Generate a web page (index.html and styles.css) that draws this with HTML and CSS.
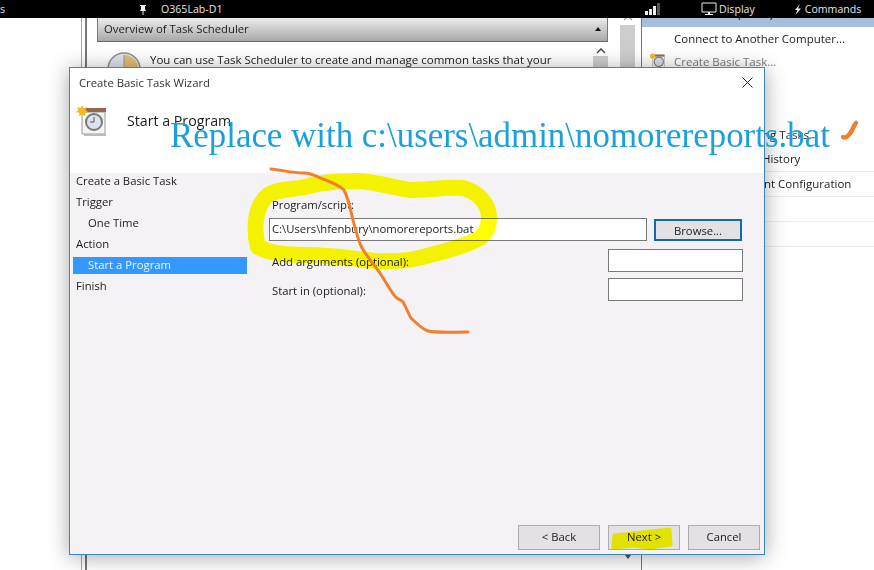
FILE: index.html
```html
<!DOCTYPE html>
<html lang="en">
<head>
    <meta charset="UTF-8">
    <title>Create Basic Task Wizard</title>
    <link rel="stylesheet" href="styles.css">
</head>
<body>
    <div class="page">
        <div class="topbar">
            <span class="cut-label">s</span>
            <svg class="pin" width="10" height="11" viewBox="0 0 10 11"><path d="M2 1h6v1H7v3l1 2H5.500v4h-1V7H2l1-2V2H2z" fill="#eee"/></svg>
            <span class="host">O365Lab-D1</span>
            <svg class="signal" width="17" height="14" viewBox="0 0 17 14"><path d="M0 9h3v4H0zM4 7h3v6H4zM8 4h3v9H8z" fill="#eee"/><path d="M12 1h3v12h-3z" fill="#555"/></svg>
            <svg class="screen" width="16" height="14" viewBox="0 0 16 14"><path d="M1 1h14v9H1z" fill="none" stroke="#eee"/><path d="M7 10h2v2H7zM4 12h8v1H4z" fill="#eee"/></svg>
            <span class="bar-label">Display</span>
            <svg class="bolt" width="8" height="11" viewBox="0 0 8 11"><path d="M6 0 1 6h2.500L1.500 11 7 4.500H4z" fill="#eee"/></svg>
            <span class="bar-label">Commands</span>
        </div>

        <div class="mmc">
            <div class="tree-blank"></div>
            <div class="splitter"></div>
            <div class="center">
                <div class="overview-head">
                    <span>Overview of Task Scheduler</span>
                    <span class="caret-up"></span>
                </div>
                <div class="overview-body">
                    <svg class="overview-clock" width="34" height="34" viewBox="0 0 34 34">
                        <circle cx="17" cy="17" r="16" fill="#dfe3ea" stroke="#8a8f98" stroke-width="1.500"/>
                        <path d="M17 3a14 14 0 0 1 0 28z" fill="#e2bd6e"/>
                        <path d="M17 3v14H6" fill="none" stroke="#8d95b5"/>
                    </svg>
                    <p class="overview-text">You can use Task Scheduler to create and manage common tasks that your</p>
                    <div class="inner-scroll">
                        <svg class="chevron" width="10" height="6" viewBox="0 0 10 6"><path d="M1 5l4-4 4 4" fill="none" stroke="#444" stroke-width="1.300"/></svg>
                        <div class="inner-thumb"></div>
                    </div>
                </div>
            </div>
            <div class="outer-scroll">
                <svg class="chevron chevron-cut" width="10" height="6" viewBox="0 0 10 6"><path d="M1 5l4-4 4 4" fill="none" stroke="#999" stroke-width="1.300"/></svg>
                <div class="outer-thumb"></div>
                <span class="caret-down"></span>
            </div>
            <div class="actions">
                <div class="actions-title"><span>Task Scheduler (Local)</span></div>
                <div class="action action-connect">Connect to Another Computer...</div>
                <div class="action action-off">
                    <svg class="action-icon" width="17" height="16" viewBox="0 0 31 31">
                        <path d="M6 4h23v25H6z" fill="#f7f5f0" stroke="#999"/>
                        <path d="M6 3h23v4H6z" fill="#94684e"/>
                        <circle cx="18" cy="17" r="9" fill="#d8dfe8" stroke="#777" stroke-width="2"/>
                        <circle cx="6" cy="6" r="5" fill="#f5b81f"/>
                    </svg>
                    Create Basic Task...
                </div>
                <div class="action action-gap">Import Task...</div>
                <div class="action action-tasks">Display All Running Tasks</div>
                <div class="action action-line">Enable All Tasks History</div>
                <div class="action action-line">AT Service Account Configuration</div>
                <div class="action action-line"></div>
                <div class="action action-line"></div>
            </div>
        </div>

        <div class="wizard">
            <div class="wizard-title">
                <span>Create Basic Task Wizard</span>
                <svg width="11" height="11" viewBox="0 0 11 11"><path d="M.5.500l10 10M10.500.500l-10 10" stroke="#222" fill="none"/></svg>
            </div>
            <div class="wizard-head">
                <svg class="wizard-icon" width="31" height="31" viewBox="0 0 31 31">
                    <path d="M6 7h23v22H6z" fill="#f7f5f0" stroke="#9a9a9a"/>
                    <path d="M8 29h22v2H8z" fill="#bbb"/>
                    <path d="M6 3h24v4H6z" fill="#94684e"/>
                    <circle cx="18" cy="17" r="8" fill="#dbe2ec" stroke="#75787d" stroke-width="2"/>
                    <path d="M18 12v5h-4" fill="none" stroke="#555"/>
                    <path d="M6 0l1.500 3L11 2 9.500 5 12 7l-3 1 .5 3L6 9.500 3 11l.5-3L0 7l2.500-2L1 2l3.500 1z" fill="#f5b81f"/>
                </svg>
                <h1 class="wizard-heading">Start a Program</h1>
            </div>
            <div class="wizard-body">
                <ul class="steps">
                    <li>Create a Basic Task</li>
                    <li>Trigger</li>
                    <li class="sub">One Time</li>
                    <li>Action</li>
                    <li class="sub current">Start a Program</li>
                    <li>Finish</li>
                </ul>
                <div class="form">
                    <label class="field-label">Program/script:</label>
                    <div class="form-row program-row">
                        <input class="box box-wide" value="C:\Users\hfenbury\nomorereports.bat">
                        <button class="btn btn-browse">Browse...</button>
                    </div>
                    <div class="form-row opt-row">
                        <label class="field-label">Add arguments (optional):</label>
                        <input class="box box-small">
                    </div>
                    <div class="form-row opt-row">
                        <label class="field-label">Start in (optional):</label>
                        <input class="box box-small">
                    </div>
                </div>
            </div>
            <div class="wizard-foot">
                <button class="btn btn-back">&lt; Back</button>
                <button class="btn btn-next">Next &gt;</button>
                <button class="btn btn-next">Cancel</button>
            </div>
        </div>

        <div class="callout">Replace with c:\users\admin\nomorereports.bat</div>

        <svg class="marker" width="874" height="570" viewBox="0 0 874 570">
            <path d="M258 247C253 228 255 206 268 195C280 188 292 190 305 187C320 182 340 181 358 181C376 182 392 187 410 190C425 190 445 187 463 188C479 192 488 204 489 216C489 226 487 232 480 238C470 244 450 250 430 255C415 260 395 262 375 261C350 258 330 255 305 255C288 255 270 254 258 247Z" fill="none" stroke="#ffff00" stroke-width="16" stroke-linejoin="round"/>
            <path d="M613 548L614 535 633 533 670 529 671 545 650 548 633 546Z" fill="#ffff00" stroke="#ffff00" stroke-width="3" stroke-linejoin="round"/>
        </svg>
        <svg class="pen" width="874" height="570" viewBox="0 0 874 570">
            <path d="M271 169C282 170 292 173 303 173C311 172 317 177 323 179C331 182 339 185 344 190C349 200 351 212 353 220C356 232 359 242 362 248C368 258 375 266 380 273C385 281 390 290 394 295C397 300 401 299 403 302C406 307 408 313 411 318C416 323 422 329 428 331C436 333 452 332 468 332" fill="none" stroke="#f0802f" stroke-width="3" stroke-linecap="round" stroke-linejoin="round"/>
            <path d="M843 137C846 139 849 135 851 132C853 129 854 125 856 123" fill="none" stroke="#f0802f" stroke-width="4.500" stroke-linecap="round" stroke-linejoin="round"/>
        </svg>
    </div>
</body>
</html>
```

FILE: styles.css
```css
body {
    margin: 0;
    background-color: #fff;
}
.page {
    position: relative;
    width: 874px;
    height: 570px;
    overflow: hidden;
    font-family: "Open Sans", "Noto Sans", sans-serif;
    font-size: 11.5px;
    color: #1c1c1c;
}

/* remote session bar */
.topbar {
    position: relative;
    z-index: 1;
    display: flex;
    align-items: center;
    height: 18px;
    background-color: #000;
    color: #e6e6e6;
    font-size: 10.6px;
}
.cut-label {
    width: 138px;
}
.pin {
    margin-right: 13px;
}
.host {
    width: 484px;
}
.signal {
    margin-right: 39px;
}
.screen {
    margin-right: 2px;
}
.bar-label {
    white-space: nowrap;
}
.bolt {
    margin-left: 39px;
    margin-right: 3px;
}

/* task scheduler behind the dialog */
.mmc {
    display: flex;
    height: 552px;
}
.tree-blank {
    width: 81px;
}
.splitter {
    width: 3px;
    border-left: 1px solid #a8a8a8;
    border-right: 2px solid #777;
}
.center {
    width: 511px;
    margin-left: 10px;
}
.overview-head {
    display: flex;
    justify-content: space-between;
    align-items: center;
    box-sizing: border-box;
    height: 24px;
    padding: 0 6px 2px 6px;
    background: linear-gradient(#ececec, #a8a8a8);
    border-left: 1px solid #777;
    border-right: 1px solid #777;
    border-bottom: 1px solid #666;
    font-size: 11.3px;
}
.caret-up {
    border: 3px solid transparent;
    border-top: 0;
    border-bottom: 4px solid #111;
}
.overview-body {
    display: flex;
    padding: 10px 0 0 10px;
}
.overview-clock {
    flex: none;
}
.overview-text {
    margin: -1px 0 0 9px;
    line-height: 18px;
    white-space: nowrap;
}
.inner-scroll {
    display: flex;
    flex-direction: column;
    align-items: center;
    gap: 2px;
    width: 15px;
    margin: -4px 0 0 auto;
}
.inner-thumb {
    width: 15px;
    height: 60px;
    background-color: #cdcdcd;
}
.outer-scroll {
    display: flex;
    flex-direction: column;
    align-items: center;
    box-sizing: border-box;
    width: 15px;
    margin-left: 12px;
    padding: 0 0 11px;
}
.chevron-cut {
    margin-top: -3px;
}
.outer-thumb {
    flex: 1;
    width: 15px;
    margin: 4px 0 2px;
    background: linear-gradient(#cdcdcd 46px, #f2f2f2 46px);
}
.caret-down {
    border: 3px solid transparent;
    border-bottom: 0;
    border-top: 4px solid #555;
}
.actions {
    flex: 1;
    margin-left: 6px;
    border-left: 1px solid #777;
}
.actions-title {
    display: flex;
    align-items: flex-end;
    box-sizing: border-box;
    height: 9px;
    overflow: hidden;
    padding: 0 0 6px 8px;
    background-color: #a7bfdc;
    line-height: 14px;
    font-size: 12px;
    white-space: nowrap;
}
.action {
    box-sizing: border-box;
    position: relative;
    height: 25px;
    padding-left: 32px;
    line-height: 24px;
    white-space: nowrap;
    border-bottom: 1px solid transparent;
}
.action-connect {
    height: 23px;
}
.action-off {
    height: 23px;
    color: #7b7b7b;
}
.action-icon {
    position: absolute;
    left: 7px;
    top: 3px;
}
.action-gap {
    height: 48px;
    visibility: hidden;
}
.action-tasks {
    height: 26px;
    line-height: 28px;
}
.action-line {
    border-bottom-color: #ececec;
}

/* wizard dialog */
.wizard {
    position: absolute;
    left: 69px;
    top: 67px;
    display: flex;
    flex-direction: column;
    box-sizing: border-box;
    width: 696px;
    height: 488px;
    background-color: #fff;
    border: 1px solid #3f86bd;
    box-shadow: 0 2px 20px rgba(0, 0, 0, 0.35);
    font-size: 11.3px;
}
.wizard-title {
    display: flex;
    justify-content: space-between;
    align-items: center;
    height: 30px;
    padding: 0 11px 2px 9px;
    box-sizing: border-box;
    color: #333;
}
.wizard-head {
    display: flex;
    height: 75px;
    box-sizing: border-box;
    padding: 7px 6px 0;
    gap: 20px;
}
.wizard-heading {
    margin: 0;
    font-size: 14.2px;
    font-weight: 400;
    line-height: 32px;
}
.wizard-body {
    flex: 1;
    display: flex;
    background-color: #f5f2f6;
}
.steps {
    width: 174px;
    margin: 0 0 0 3px;
    padding: 0;
    list-style: none;
}
.steps li {
    height: 17px;
    margin-bottom: 4px;
    padding-left: 3px;
    line-height: 15px;
}
.steps .sub {
    padding-left: 15px;
}
.steps .current {
    background-color: #3399ff;
    color: #f0f6ff;
}
.form {
    width: 474px;
    margin-left: 22px;
    padding-top: 21px;
}
.field-label {
    display: block;
    padding-left: 3px;
    line-height: 22px;
}
.form-row {
    display: flex;
    justify-content: space-between;
}
.program-row {
    margin: 2px 0 8px;
    height: 23px;
    align-items: flex-end;
}
.opt-row {
    height: 23px;
    margin-bottom: 6px;
}
.opt-row .field-label {
    line-height: 26px;
}
.box {
    box-sizing: border-box;
    height: 23px;
    margin: 0;
    padding: 0 2px 2px;
    background-color: #fff;
    border: 1px solid #7a7a7a;
    border-radius: 0;
    outline: none;
    font: inherit;
    color: #1c1c1c;
}
.box-wide {
    width: 378px;
}
.box-small {
    width: 135px;
}
.btn {
    box-sizing: border-box;
    height: 25px;
    margin: 0;
    padding: 0 0 2px;
    background-color: #e3e1e4;
    border: 1px solid #adadad;
    border-radius: 0;
    font: inherit;
    color: #1c1c1c;
}
.btn-browse {
    width: 88px;
    height: 22px;
    margin-right: 1px;
    padding: 0;
    border: 2px solid #1368ae;
}
.btn-back {
    width: 82px;
}
.btn-next {
    width: 72px;
}
.wizard-foot {
    display: flex;
    justify-content: flex-end;
    gap: 8px;
    padding: 0 4px 4px;
    background-color: #f5f2f6;
}

/* annotations drawn over the screenshot */
.callout {
    position: absolute;
    left: 170px;
    top: 114px;
    font-family: "Liberation Serif", serif;
    font-size: 34.9px;
    line-height: 44px;
    color: #1c9fdd;
    white-space: nowrap;
}
.marker,
.pen {
    position: absolute;
    left: 0;
    top: 0;
}
.marker {
    mix-blend-mode: multiply;
}
```
